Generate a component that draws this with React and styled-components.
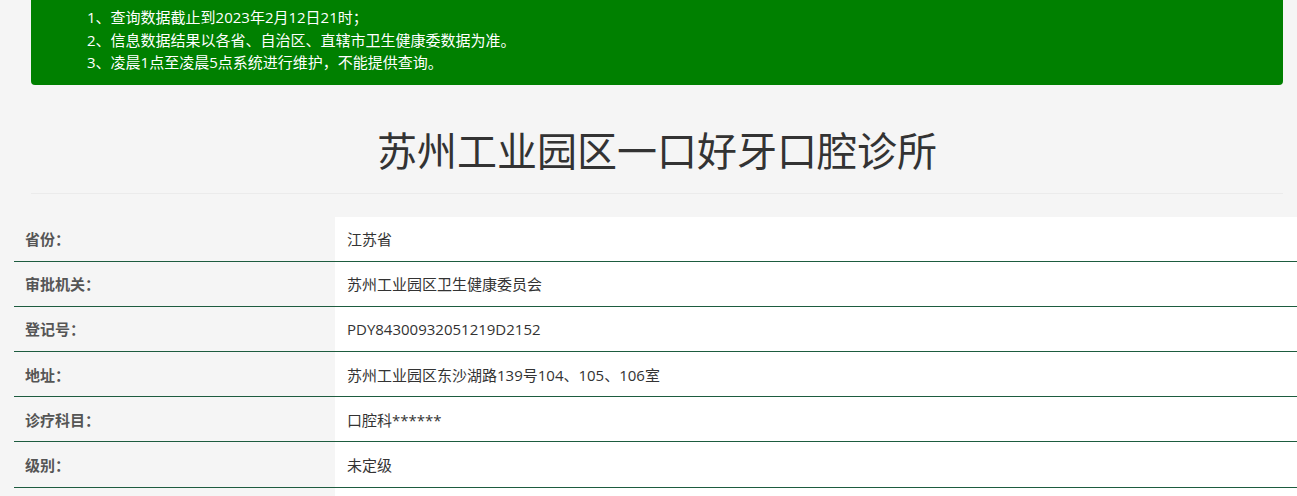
import React from 'react';
import styled, { createGlobalStyle } from 'styled-components';

const GlobalStyle = createGlobalStyle`
  html, body {
    margin: 0;
    padding: 0;
    background: #f5f5f5;
    font-family: "Open Sans", "Noto Sans CJK SC", sans-serif;
    color: #333;
    overflow: hidden;
  }
`

const Page = styled.div`
  width: 1297px;
  height: 496px;
  overflow: hidden;
`

const Header = styled.div`
  margin: 0 14px 0 31px;
`

const Notice = styled.div`
  background-color: #008000;
  color: #fff;
  border-radius: 0 0 4px 4px;
  padding: 7px 0 11px 56px;
  font-size: 15px;
  line-height: 22.5px;
  margin-top: -1px;
`

const Title = styled.h1`
  margin: 0;
  padding: 36px 0 0;
  height: 109px;
  box-sizing: border-box;
  text-align: center;
  font-size: 40px;
  font-weight: 400;
  line-height: 60px;
  color: #333;
  border-bottom: 1px solid #ebebeb;
`

const Table = styled.div`
  margin: 23px 0 0 14px;
`

const Row = styled.div`
  display: grid;
  grid-template-columns: 321px 1fr;
  height: 45.2px;
  border-bottom: 1px solid #1d5c3f;
  box-sizing: border-box;
  font-size: 15px;
`

const Label = styled.div`
  display: flex;
  align-items: center;
  padding-left: 11px;
  font-weight: bold;
  color: #555;
  background: #f5f5f5;
`

const Value = styled.div`
  display: flex;
  align-items: center;
  padding-left: 12px;
  color: #333;
  background: #fff;
`

const notes = [
  '1、查询数据截止到2023年2月12日21时；',
  '2、信息数据结果以各省、自治区、直辖市卫生健康委数据为准。',
  '3、凌晨1点至凌晨5点系统进行维护，不能提供查询。',
];

const rows = [
  ['省份：', '江苏省'],
  ['审批机关：', '苏州工业园区卫生健康委员会'],
  ['登记号：', 'PDY84300932051219D2152'],
  ['地址：', '苏州工业园区东沙湖路139号104、105、106室'],
  ['诊疗科目：', '口腔科******'],
  ['级别：', '未定级'],
  ['', ''],
];

const App = () => {
  return (
    <Page>
      <GlobalStyle />
      <Header>
        <Notice>
          {notes.map((n) => (
            <div key={n}>{n}</div>
          ))}
        </Notice>
        <Title>苏州工业园区一口好牙口腔诊所</Title>
      </Header>
      <Table>
        {rows.map(([label, value], i) => (
          <Row key={i}>
            <Label>{label}</Label>
            <Value>{value}</Value>
          </Row>
        ))}
      </Table>
    </Page>
  );
};

export default App;
